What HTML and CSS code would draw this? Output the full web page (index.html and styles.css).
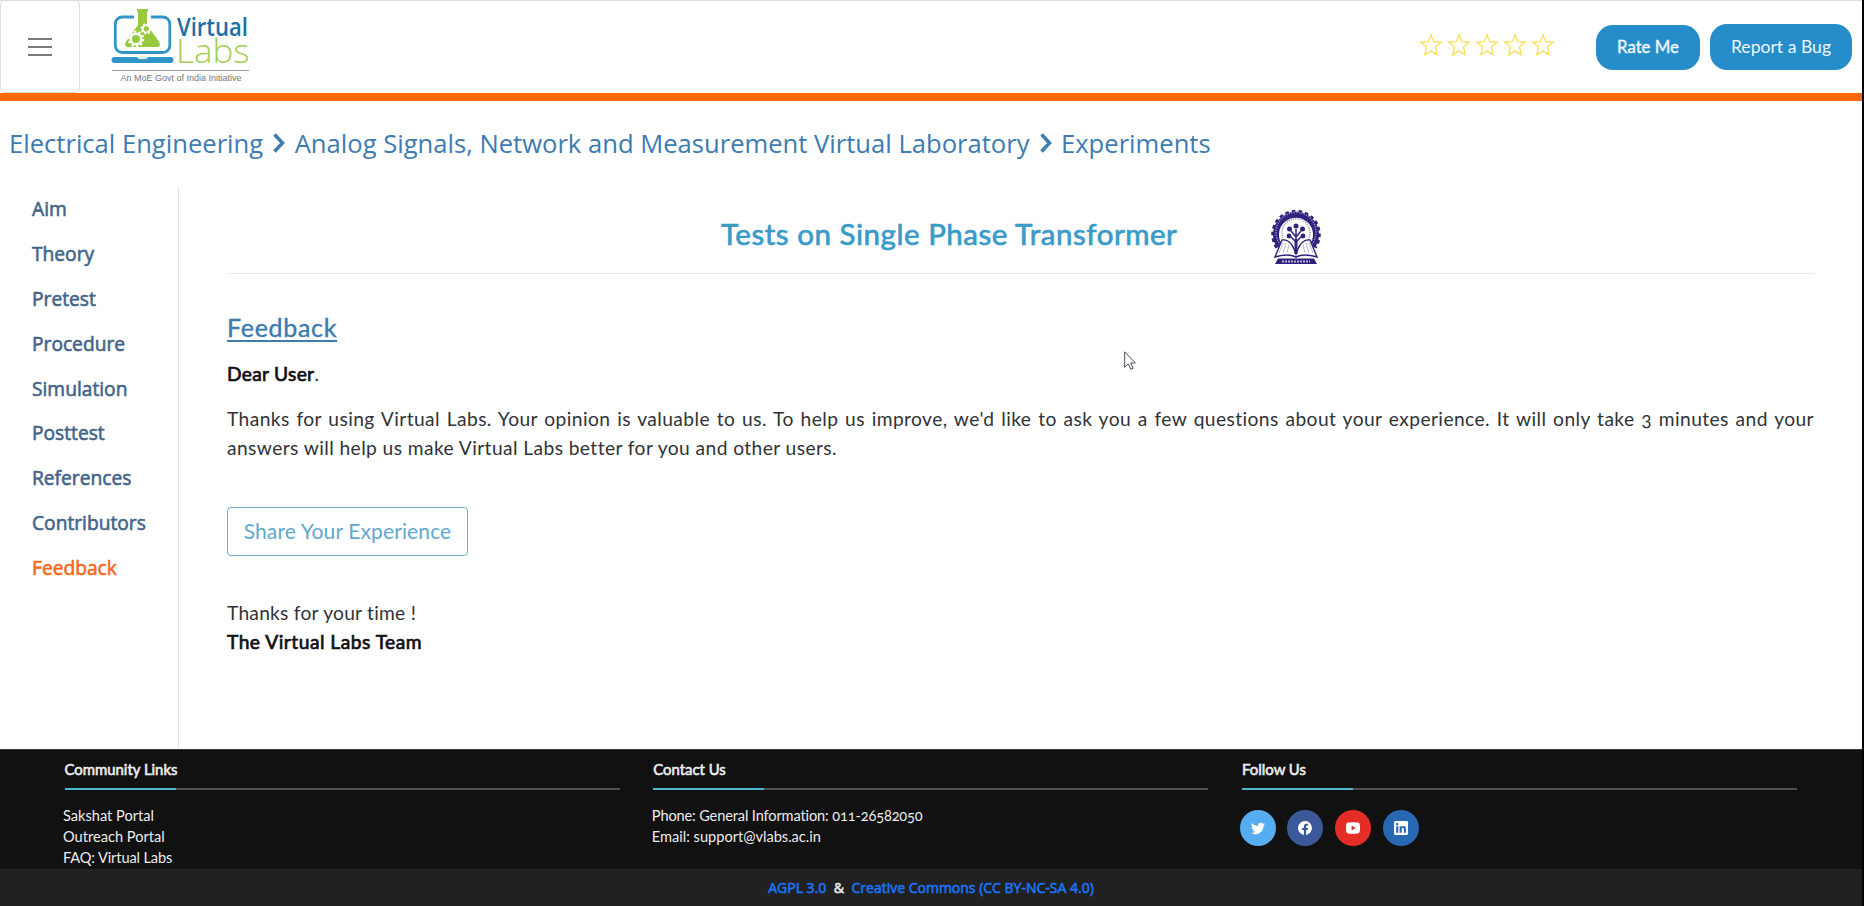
FILE: index.html
```html
<!DOCTYPE html>
<html lang="en">
<head>
<meta charset="utf-8">
<title>Tests on Single Phase Transformer</title>
<link rel="stylesheet" href="styles.css">
</head>
<body>
<header class="header">
  <button class="menu-toggle" aria-label="Menu"><span></span><span></span><span></span></button>
  <svg class="logo" width="150" height="78" viewBox="105 5 150 78">
    <rect x="115.300" y="17" width="54.500" height="35.500" rx="7" fill="none" stroke="#3295c9" stroke-width="2.800"/>
    <rect x="134" y="14" width="17" height="7" fill="#fff"/>
    <path d="M137 9h11v2.500h-1V25l12 16.500q3 5.500-3 5.500h-27q-6 0-3-5.500L138 25V11.500h-1z" fill="#96c93d"/>
    <circle cx="136" cy="39" r="5.300" fill="none" stroke="#fff" stroke-width="2.600"/>
    <circle cx="136" cy="39" r="7.300" fill="none" stroke="#fff" stroke-width="2" stroke-dasharray="2.300 2.286"/>
    <circle cx="146.300" cy="28.800" r="3.600" fill="none" stroke="#fff" stroke-width="1.900"/>
    <circle cx="146.300" cy="28.800" r="5.100" fill="none" stroke="#fff" stroke-width="1.500" stroke-dasharray="2 2.005"/>
    <path d="M114.500 57H137q1 2 3 2h5q2 0 3-2h23q2.500 0 2.500 3t-3 3h-56q-3 0-3-3t3-3z" fill="#3295c9"/>
    <path d="M112 70.500h137" stroke="#999"/>
    <text class="logo-virtual" x="177" y="36" textLength="71" lengthAdjust="spacingAndGlyphs">Virtual</text>
    <text class="logo-labs" x="176" y="62.700" textLength="73.500" lengthAdjust="spacingAndGlyphs">Labs</text>
    <text class="logo-tag" x="120.500" y="81" textLength="121" lengthAdjust="spacingAndGlyphs">An MoE Govt of India Initiative</text>
  </svg>
  <div class="stars">
    <svg viewBox="0 0 22 22"><path d="M11 .8l2.700 6.900 7.500.5-5.800 4.700 1.900 8L11 16.800l-6.300 4.100 1.900-8L.8 8.200l7.500-.5z"/></svg>
    <svg viewBox="0 0 22 22"><path d="M11 .8l2.700 6.900 7.500.5-5.800 4.700 1.900 8L11 16.800l-6.300 4.100 1.900-8L.8 8.200l7.500-.5z"/></svg>
    <svg viewBox="0 0 22 22"><path d="M11 .8l2.700 6.900 7.500.5-5.800 4.700 1.900 8L11 16.800l-6.300 4.100 1.900-8L.8 8.200l7.500-.5z"/></svg>
    <svg viewBox="0 0 22 22"><path d="M11 .8l2.700 6.900 7.500.5-5.800 4.700 1.900 8L11 16.800l-6.300 4.100 1.900-8L.8 8.200l7.500-.5z"/></svg>
    <svg viewBox="0 0 22 22"><path d="M11 .8l2.700 6.900 7.500.5-5.800 4.700 1.900 8L11 16.800l-6.300 4.100 1.900-8L.8 8.200l7.500-.5z"/></svg>
  </div>
  <button class="pill pill-rate">Rate Me</button>
  <button class="pill pill-bug">Report a Bug</button>
</header>
<nav class="breadcrumb">
  <a>Electrical Engineering</a>
  <svg class="chevron" viewBox="0 0 14 20"><path d="M2.500 1.500l8 8.500-8 8.500"/></svg>
  <a>Analog Signals, Network and Measurement Virtual Laboratory</a>
  <svg class="chevron" viewBox="0 0 14 20"><path d="M2.500 1.500l8 8.500-8 8.500"/></svg>
  <a>Experiments</a>
</nav>
<main class="layout">
  <aside class="sidebar">
    <a>Aim</a><a>Theory</a><a>Pretest</a><a>Procedure</a><a>Simulation</a><a>Posttest</a><a>References</a><a>Contributors</a><a class="active">Feedback</a>
  </aside>
  <section class="content">
    <div class="title-row">
      <h1>Tests on Single Phase Transformer</h1>
      <svg class="emblem" viewBox="0 0 50 56">
        <path d="M8.500 37A20 20 0 1 1 41.500 37" fill="none" stroke="#30217c" stroke-width="6"/>
        <path d="M6 38.500A23 23 0 1 1 44 38.500" fill="none" stroke="#30217c" stroke-width="3.500" stroke-dasharray="3.500 3"/>
        <path d="M9.500 36A20 20 0 1 1 40.500 36" fill="none" stroke="#8d86b8" stroke-width="1.600" stroke-dasharray="1.300 1.200"/>
        <path d="M13 31A14 14 0 1 1 37 31" fill="none" stroke="#8d86b8" stroke-width="1.500" stroke-dasharray="1 1.200"/>
        <path d="M25 20v24M25 33l-6-6M25 33l6-6M25 28l-5-6M25 28l5-6" stroke="#30217c" stroke-width="1.500"/>
        <g fill="#30217c"><circle cx="25" cy="17" r="2.500"/><circle cx="18.500" cy="20" r="2.500"/><circle cx="31.500" cy="20" r="2.500"/><circle cx="18" cy="27" r="2.400"/><circle cx="32" cy="27" r="2.400"/></g>
        <path d="M11 31L4 48q13-4 21 0 8-4 21 0L39 31q-8-1-12 9l-2 5-2-5q-4-10-12-9z" fill="#fff" stroke="#30217c" stroke-width="1.400"/>
        <path d="M12 34l-4 10M15 34l-3 10M18 36l-2 8M38 34l4 10M35 34l3 10M32 36l2 8" stroke="#aaa5cb" stroke-width=".8"/>
        <path d="M25 30v15" stroke="#30217c" stroke-width="3"/>
        <path d="M7 49.500h36l3 5.500H4z" fill="#30217c"/><path d="M11 52.500h28" stroke="#b9b5d5" stroke-width="1.800" stroke-dasharray="2 1"/>
      </svg>
    </div>
    <h2>Feedback</h2>
    <p class="greeting"><b>Dear User</b>.</p>
    <p class="message">Thanks for using Virtual Labs. Your opinion is valuable to us. To help us improve, we'd like to ask you a few questions about your experience. It will only take 3 minutes and your answers will help us make Virtual Labs better for you and other users.</p>
    <button class="share">Share Your Experience</button>
    <p class="closing">Thanks for your time !<br><b>The Virtual Labs Team</b></p>
  </section>
  <svg class="cursor" viewBox="0 0 12 19"><path d="M.7.800v15.500l3.600-3.500 2.500 5.500 2.300-1-2.400-5.300h4.600z"/></svg>
</main>
<footer class="footer">
  <div class="footer-col">
    <h3>Community Links</h3>
    <div class="rule"></div>
    <div class="lines"><a>Sakshat Portal</a><a>Outreach Portal</a><a class="faq">FAQ: Virtual Labs</a></div>
  </div>
  <div class="footer-col">
    <h3>Contact Us</h3>
    <div class="rule"></div>
    <div class="lines"><span class="phone">Phone: General Information: 011-26582050</span><span>Email: support@vlabs.ac.in</span></div>
  </div>
  <div class="footer-col">
    <h3>Follow Us</h3>
    <div class="rule"></div>
    <div class="social">
      <a class="twitter"><svg viewBox="0 0 16 16"><path d="M5 15c6 0 9.300-5 9.300-9.300v-.4A6.700 6.700 0 0 0 16 3.500a6.600 6.600 0 0 1-1.900.5 3.300 3.300 0 0 0 1.500-1.800 6.600 6.600 0 0 1-2.100.8 3.300 3.300 0 0 0-5.600 3A9.300 9.300 0 0 1 1.100 2.600a3.300 3.300 0 0 0 1 4.400A3.300 3.300 0 0 1 .6 6.600a3.300 3.300 0 0 0 2.600 3.200 3.300 3.300 0 0 1-1.500.1 3.300 3.300 0 0 0 3.100 2.300A6.600 6.600 0 0 1 0 13.500 9.300 9.300 0 0 0 5 15"/></svg></a>
      <a class="facebook"><svg viewBox="0 0 16 16"><path d="M16 8a8 8 0 1 0-9.250 7.900v-5.590H4.720V8h2.030V6.240c0-2 1.200-3.120 3.020-3.120.88 0 1.800.16 1.800.16v1.970h-1.010c-1 0-1.310.62-1.310 1.260V8h2.220l-.36 2.310H9.250v5.590A8 8 0 0 0 16 8"/></svg></a>
      <a class="youtube"><svg viewBox="0 0 16 16"><path fill-rule="evenodd" d="M2.500 1.800Q8 1 13.500 1.800 15.500 2.100 15.800 4q.4 4 0 8-.3 1.900-2.300 2.200-5.500.8-11 0-2-.3-2.300-2.200-.4-4 0-8 .3-1.900 2.300-2.200zM6.400 5.200v5.600L11 8z"/></svg></a>
      <a class="linkedin"><svg viewBox="0 0 16 16"><path fill-rule="evenodd" d="M1.500 0h13Q16 0 16 1.500v13q0 1.500-1.500 1.500h-13Q0 16 0 14.500v-13Q0 0 1.500 0zM2.500 6v7.500h2.400V6zM3.700 2.400a1.400 1.400 0 1 0 0 2.800 1.400 1.400 0 0 0 0-2.800zM6.400 6v7.500h2.400V9.800q0-2 1.300-2t1.200 2v3.700h2.400V9.200q0-3.400-2.800-3.400-1.500 0-2.200 1.200V6z"/></svg></a>
    </div>
  </div>
</footer>
<div class="license"><a>AGPL 3.0</a><span>&amp;</span><a>Creative Commons (CC BY-NC-SA 4.0)</a></div>
</body>
</html>
```
FILE: styles.css
```css
* { box-sizing: border-box; }
body {
  margin: 0;
  width: 1864px;
  height: 906px;
  overflow: hidden;
  background: #fff;
  border-right: 2px solid #000;
  color: #2f3337;
  font-family: Lato, "Open Sans", sans-serif;
  font-size: 19.2px;
  font-variant-numeric: oldstyle-nums;
  font-variant-ligatures: none;
}
button { font: inherit; margin: 0; padding: 0; border: 0; background: none; }
h1, h2, h3, p { margin: 0; font-weight: 400; }

.header {
  display: flex;
  height: 101px;
  border-top: 1px solid #ddd;
  border-bottom: 8px solid #ff6a05;
}
.menu-toggle {
  width: 80px;
  height: 93px;
  margin-top: -1px;
  border: 1px solid #dcdcdc;
  border-radius: 5px;
  display: flex;
  flex-direction: column;
  align-items: center;
  justify-content: center;
  gap: 6px;
}
.menu-toggle span { width: 24px; height: 2px; background: #7b7b7b; }
.logo { margin: 4px 0 0 25px; overflow: visible; }
.logo-virtual { font: 600 25.500px "Open Sans", sans-serif; fill: #1d6ea5; }
.logo-labs { font: 300 33px "Open Sans", sans-serif; fill: #a4cf55; }
.logo-tag { font: 9px "Liberation Sans", sans-serif; fill: #777; }

.stars { display: flex; gap: 6px; margin: 33px 0 0 auto; }
.stars svg { width: 22px; height: 22px; fill: none; stroke: #fbdf62; stroke-width: 1.400; }
.pill { background: #278dca; color: #edf7fd; border-radius: 17px; padding-bottom: 2px; }
.pill-rate { width: 104px; height: 45px; margin: 24px 0 0 42px; font-size: 16.800px; -webkit-text-stroke: .4px; }
.pill-bug { width: 142px; height: 46px; margin: 23px 10px 0; font-size: 17.600px; }

.breadcrumb {
  display: flex;
  align-items: center;
  height: 86px;
  padding: 0 0 2px 9px;
  color: #3d7bb0;
  font: 25.600px "Open Sans", sans-serif;
}
.chevron { width: 14px; height: 20px; margin: 0 8.300px 0 9.200px; fill: none; stroke: currentColor; stroke-width: 3.500; }

.layout { display: flex; height: 562px; position: relative; }
.sidebar {
  width: 179px;
  border-right: 1px solid #e2e2e2;
  padding: .4px 0 0 32px;
  display: flex;
  flex-direction: column;
  color: #44658a;
  font: 19.2px/44.800px "Open Sans", sans-serif;
  -webkit-text-stroke: .6px;
}
.active { color: #f26a1b; }
.content { flex: 1; padding: 0 48px; }
.title-row { height: 87px; border-bottom: 1px solid #e8e8e8; display: flex; align-items: flex-start; }
h1 { margin: 29px 0 0 494px; font-size: 29.500px; line-height: 36px; letter-spacing: .53px; color: #3a9bc9; -webkit-text-stroke: .7px; white-space: nowrap; }
.emblem { width: 50px; height: 56px; margin: 22px 0 0 94px; }
h2 { margin-top: 38px; font-size: 25px; line-height: 30px; letter-spacing: .7px; color: #3d7bb0; -webkit-text-stroke: .4px; text-decoration: underline; text-decoration-thickness: 2px; text-underline-offset: 3px; }
.greeting { margin-top: 17px; line-height: 29px; }
b { font-weight: 400; letter-spacing: .5px; -webkit-text-stroke: .7px; color: #111; }
.greeting b { letter-spacing: .3px; }
.message { margin-top: 16px; line-height: 29px; letter-spacing: .42px; text-align: justify; }
.share { width: 241px; height: 49px; margin-top: 45px; padding-bottom: 3px; border: 1.500px solid #6bb0d3; border-radius: 4px; color: #5fa9d0; font-size: 21px; letter-spacing: .12px; }
.closing { margin-top: 42px; line-height: 29px; letter-spacing: .25px; }
.cursor { position: absolute; left: 1124px; top: 164px; width: 12px; height: 19px; fill: #fff; stroke: #4b4b5b; stroke-width: 1; }

.footer {
  display: flex;
  gap: 33.800px;
  height: 120px;
  padding: 0 64.500px;
  background: #111;
  border-top: 1px solid #383838;
  color: #ececec;
  font-size: 14.600px;
  line-height: 21px;
}
.footer-col { width: 555px; }
h3 { padding-top: 9px; height: 38px; font-size: 14.900px; line-height: 21px; -webkit-text-stroke: .6px; }
.rule { height: 2px; margin-bottom: 15px; background: linear-gradient(to right, #4ab5cf 20%, #505050 20%); }
.lines { display: flex; flex-direction: column; margin-left: -1.500px; }
.phone { letter-spacing: -.14px; }
.faq { letter-spacing: -.12px; }
.social { display: flex; gap: 11.700px; margin: 20px 0 0 -2.300px; }
.social a { width: 36px; height: 36px; border-radius: 50%; display: grid; place-items: center; }
.social svg { width: 14px; height: 14px; fill: #fff; }
.twitter { background: #55acee; }
.facebook { background: #3b5998; }
.youtube { background: #e52d27; }
.linkedin { background: #2867b2; }
.license {
  height: 37px;
  display: flex;
  justify-content: center;
  gap: 7.500px;
  background: #212121;
  color: #e8e8e8;
  font: 14px/38px "Open Sans", sans-serif;
  -webkit-text-stroke: .6px;
}
.license a { color: #1a73f5; }
```
